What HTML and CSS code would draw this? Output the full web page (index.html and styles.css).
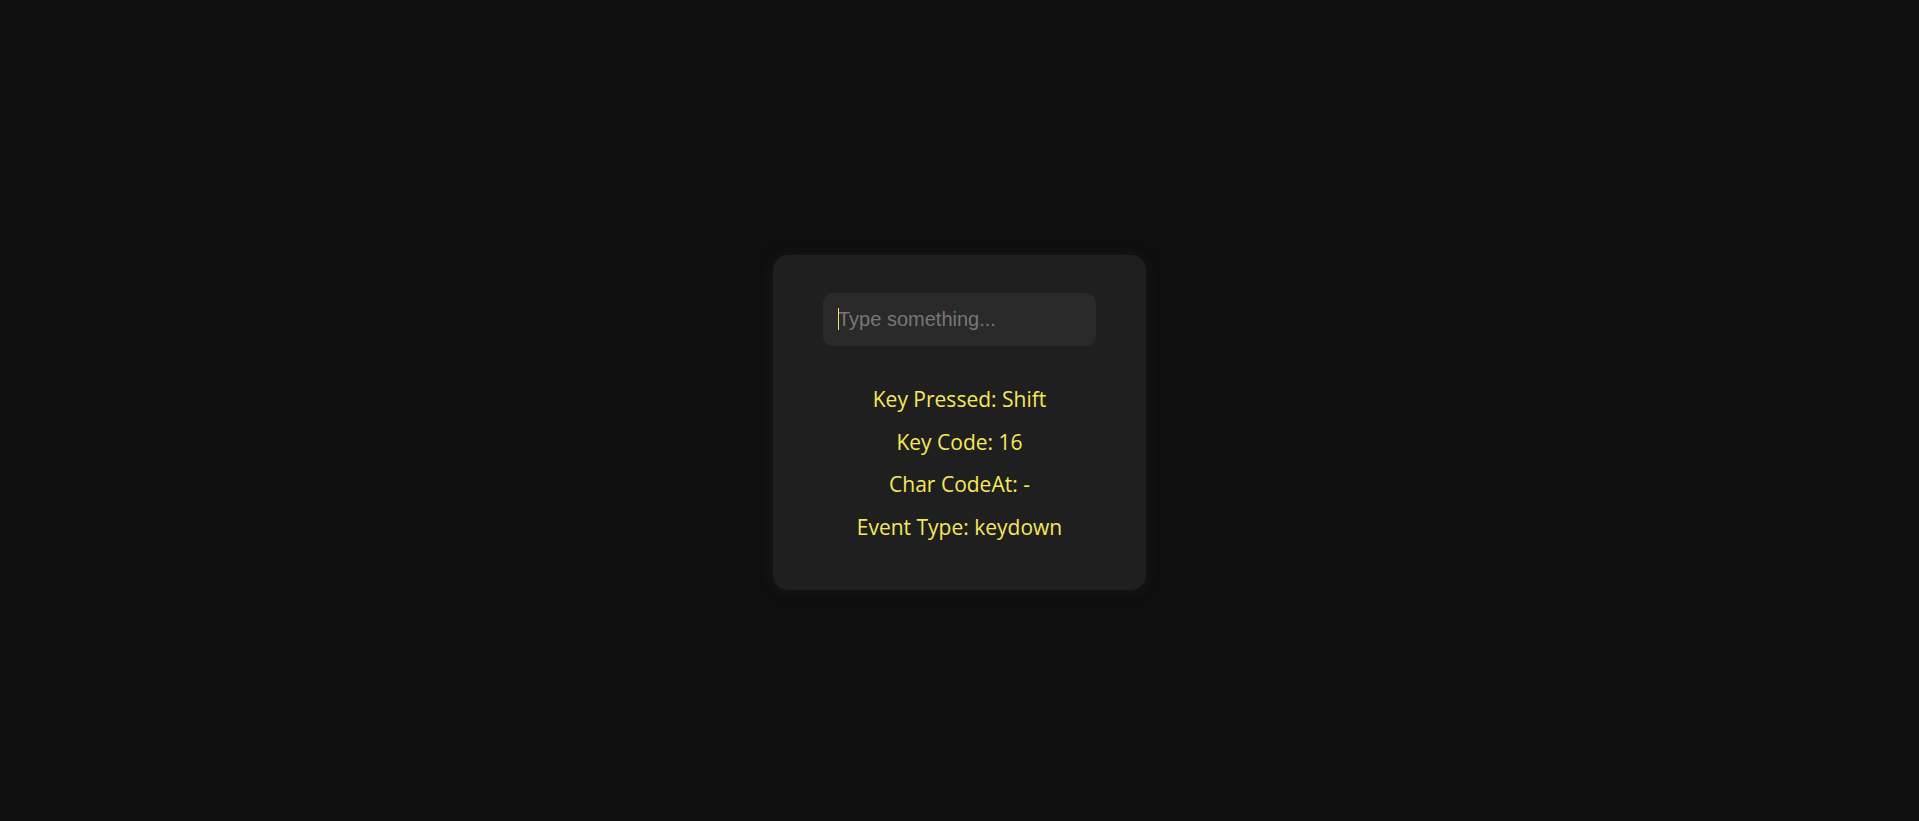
FILE: index.html
```html
<!DOCTYPE html>
<html lang="en">
<head>
<meta charset="utf-8">
<title>Key Event Viewer</title>
<link rel="stylesheet" href="styles.css">
</head>
<body>
<main class="stage">
  <section class="card">
    <label class="field">
      <input class="key-input" type="text" placeholder="Type something...">
      <span class="caret"></span>
    </label>
    <div class="info">
      <div class="line">Key Pressed: Shift</div>
      <div class="line">Key Code: 16</div>
      <div class="line">Char CodeAt: -</div>
      <div class="line">Event Type: keydown</div>
    </div>
  </section>
</main>
</body>
</html>
```
FILE: styles.css
```css
html, body {
  margin: 0;
  padding: 0;
  background: #0f0f0f;
}

.stage {
  box-sizing: border-box;
  min-height: 100vh;
  padding-top: 24px;
  display: flex;
  justify-content: center;
  align-items: center;
}

.card {
  box-sizing: border-box;
  width: 373px;
  padding: 38px 50px 42px;
  background: #1f1f1f;
  border-radius: 15px;
  box-shadow: 0 0 14px rgba(40, 40, 40, 0.35);
  display: flex;
  flex-direction: column;
  align-items: stretch;
}

.field {
  position: relative;
  display: block;
}

.key-input {
  box-sizing: border-box;
  display: block;
  width: 100%;
  height: 53px;
  padding: 0 15px;
  border: none;
  outline: none;
  border-radius: 10px;
  background: #2a2a2a;
  color: #dddddd;
  caret-color: #f2e55a;
  font-family: "Liberation Sans", Arial, sans-serif;
  font-size: 20px;
}

.key-input::placeholder {
  color: #777777;
}

.caret {
  position: absolute;
  left: 15px;
  top: 15px;
  width: 1px;
  height: 22px;
  background: #f2e55a;
  pointer-events: none;
}

.info {
  margin-top: 32px;
  display: flex;
  flex-direction: column;
  align-items: center;
}

.line {
  height: 42.5px;
  line-height: 42.5px;
  color: #f6e85a;
  font-family: "Open Sans", "Noto Sans", sans-serif;
  font-size: 21px;
  white-space: nowrap;
}
```
